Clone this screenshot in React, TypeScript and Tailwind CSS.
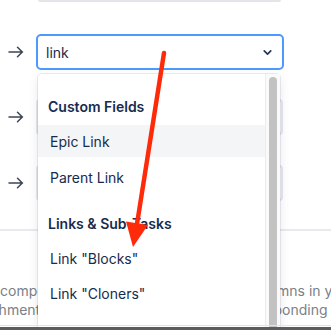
import { ChevronDown } from "lucide-react";

function RowArrow() {
  return (
    <div className="w-[36px] shrink-0 pl-[8px]">
      <svg width="16" height="12" viewBox="0 0 16 12" fill="none">
        <path
          d="M1 6h13.5M9.5 1.2 14.3 6l-4.8 4.8"
          stroke="#3b4556"
          strokeWidth="1.5"
          strokeLinecap="round"
          strokeLinejoin="round"
        />
      </svg>
    </div>
  );
}

function Option({ label, active }: { label: string; active?: boolean }) {
  return (
    <div
      className={`h-[32px] flex items-center px-[12px] text-[14px] text-[#172B4D] ${
        active ? "bg-[#F4F5F7]" : ""
      }`}
    >
      {label}
    </div>
  );
}

export default function App() {
  return (
    <div className="relative w-[331px] h-[330px] overflow-hidden bg-white font-['Inter',sans-serif]">
      {/* field above, only its bottom edge shows */}
      <div className="ml-[38px] w-[243px] h-[2px] bg-[#e4e5ea] rounded-b" />

      {/* mapping rows */}
      <div className="mt-[32px] flex items-center h-[36px]">
        <RowArrow />
        <div className="w-[248px] h-[36px] rounded-[5px] border-2 border-[#4C9AFF] bg-white flex items-center justify-between pl-[8px] pr-[8px]">
          <span className="text-[14px] text-[#172B4D]">link</span>
          <ChevronDown size={13} strokeWidth={3.2} className="text-[#253858]" />
        </div>
      </div>
      <div className="mt-[29px] flex items-center h-[36px]">
        <RowArrow />
        <div className="w-[247px] h-[36px] rounded-[4px] border-2 border-[#e6e7ee] bg-[#FAFBFC]" />
      </div>
      <div className="mt-[30px] flex items-center h-[36px]">
        <RowArrow />
        <div className="w-[247px] h-[36px] rounded-[4px] border-2 border-[#e6e7ee] bg-[#FAFBFC]" />
      </div>

      <div className="mt-[28px] h-[2px] bg-[#e9eaee]" />

      {/* description text under the menu */}
      <div className="mt-[50px] text-[14px] leading-[19px] text-[#7a7f88]">
        <div className="flex whitespace-nowrap">
          <span className="w-[249px] shrink-0 overflow-hidden">components will be mapped to the</span>
          <span className="shrink-0">columns in your project</span>
        </div>
        <div className="flex whitespace-nowrap ml-[-34px]">
          <span className="w-[265px] shrink-0 overflow-hidden">attachments are copied to the</span>
          <span className="shrink-0">corresponding issue</span>
        </div>
      </div>

      <div className="relative z-10 mt-[6px] h-px bg-[#e3e3e3]" />
      <div className="relative z-10 mt-px h-[4px] bg-[#5c5c5c]" />

      {/* open dropdown menu */}
      <div className="absolute left-[38px] top-[74px] w-[242px] h-[262px] flex bg-white rounded-t-[4px] shadow-[0_0_0_1px_rgba(9,30,66,0.08),0_4px_11px_rgba(9,30,66,0.1)]">
        <div className="flex-1 pt-[23px]">
          <div className="px-[10px] text-[14px] leading-[20px] font-semibold text-[#172B4D]">
            Custom Fields
          </div>
          <div className="mt-[8px]">
            <Option label="Epic Link" active />
          </div>
          <div className="mt-[4px]">
            <Option label="Parent Link" />
          </div>
          <div className="mt-[21px] px-[10px] text-[14px] leading-[20px] font-semibold text-[#172B4D]">
            Links &amp; Sub-Tasks
          </div>
          <div className="mt-[8px]">
            <Option label={'Link "Blocks"'} />
          </div>
          <div className="mt-[3px]">
            <Option label={'Link "Cloners"'} />
          </div>
        </div>
        <div className="w-[15px] border-l border-[#ececec] bg-[#fafafa] pt-[3px]">
          <div className="mx-auto w-[8px] h-[300px] rounded-full bg-[#c2c2c2]" />
        </div>
      </div>

      {/* annotation arrow */}
      <svg className="absolute left-0 top-0 z-20" width="331" height="330" viewBox="0 0 331 330">
        <line x1="164" y1="53" x2="137" y2="224" stroke="#ff2a0a" strokeWidth="4.5" strokeLinecap="round" />
        <polygon points="133,247 148,225 126,221.5" fill="#ff2a0a" />
      </svg>
    </div>
  );
}
